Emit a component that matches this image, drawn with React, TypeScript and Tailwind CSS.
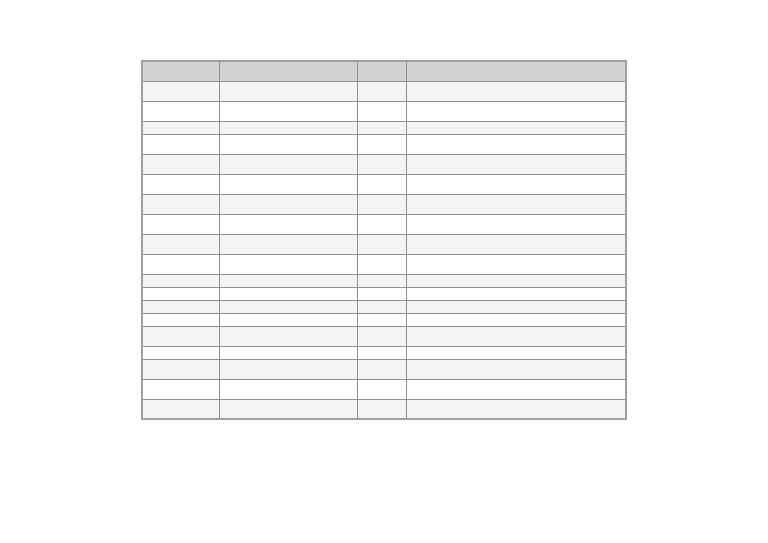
import React from "react";

const rows = [20, 20, 13, 20, 20, 20, 20, 20, 20, 20, 13, 13, 13, 13, 20, 13, 20, 20, 20];

export default function App() {
  return (
    <div className="w-[768px] h-[543px] bg-white flex justify-center pt-[60px]" style={{ fontFamily: '"Liberation Sans", Arial, sans-serif' }}>
      <div>
        <table className="table-fixed border-collapse border-2 border-[#a0a0a0] w-[484px]">
          <colgroup>
            <col className="w-[77px]" />
            <col className="w-[138px]" />
            <col className="w-[49px]" />
            <col className="w-[220px]" />
          </colgroup>
          <thead>
            <tr className="h-[20px] bg-[#d3d3d3]">
              <th className="border border-[#8f8f8f] p-0"></th>
              <th className="border border-[#8f8f8f] p-0"></th>
              <th className="border border-[#8f8f8f] p-0"></th>
              <th className="border border-[#8f8f8f] p-0"></th>
            </tr>
          </thead>
          <tbody>
            {rows.map((h, i) => (
              <tr key={i} className={`${h === 20 ? "h-[20px]" : "h-[13px]"} ${i % 2 === 0 ? "bg-[#f4f4f4]" : "bg-white"}`}>
                <td className="border border-[#8f8f8f] p-0"></td>
                <td className="border border-[#8f8f8f] p-0"></td>
                <td className="border border-[#8f8f8f] p-0"></td>
                <td className="border border-[#8f8f8f] p-0"></td>
              </tr>
            ))}
          </tbody>
        </table>
      </div>
    </div>
  );
}
